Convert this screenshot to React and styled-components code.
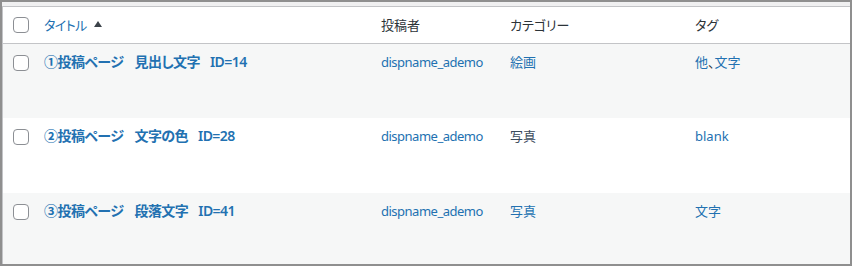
import React from "react";
import styled, { createGlobalStyle } from "styled-components";

const Global = createGlobalStyle`
  html, body { margin: 0; padding: 0; background: #ffffff; overflow: hidden; }
  body {
    font-family: "Noto Sans", "Noto Sans CJK JP", sans-serif;
    font-feature-settings: "palt";
    font-size: 13px;
    color: #2c3338;
  }
`;

const Frame = styled.div`
  width: 848px;
  height: 258px;
  border: 2px solid #8f8f8f;
  background: #f0f0f1;
  padding-top: 4px;
  box-sizing: content-box;
  overflow: hidden;
`;

const Table = styled.div`
  border-top: 1px solid #c3c4c7;
  border-left: 1px solid #c3c4c7;
  background: #fff;
`;

const Row = styled.div`
  display: grid;
  grid-template-columns: 31px 337px 129px 185px 1fr;
  height: ${(p) => p.$h}px;
  background: ${(p) => (p.$alt ? "#f6f7f7" : "#ffffff")};
  border-bottom: ${(p) => (p.$head ? "1px solid #c3c4c7" : "none")};
`;

const Cell = styled.div`
  padding: 8px 10px;
  line-height: 20px;
  font-size: 13px;
  white-space: nowrap;
`;

const CheckCell = styled.div`
  padding: ${(p) => (p.$head ? "10px 0 0 10px" : "11px 0 0 10px")};
`;

const Box = styled.span`
  display: block;
  width: 16px;
  height: 16px;
  box-sizing: border-box;
  border: 1px solid #8c8f94;
  border-radius: 4px;
  background: #fff;
`;

const HeadText = styled.span`
  color: #2c3338;
  font-size: 13px;
`;

const SortLink = styled.a`
  display: inline-flex;
  align-items: center;
  gap: 7px;
  color: #2271b1;
  text-decoration: none;
  letter-spacing: -0.6px;
`;

const Arrow = styled.span`
  width: 0;
  height: 0;
  border-left: 4px solid transparent;
  border-right: 4px solid transparent;
  border-bottom: 6px solid #3c434a;
  margin-top: -2px;
`;

const Title = styled.a`
  font-size: 14px;
  font-weight: 600;
  color: #2271b1;
  text-decoration: none;
  letter-spacing: -0.55px;
`;

const Gap = styled.span`
  display: inline-block;
  width: ${(p) => p.$w}px;
`;

const Link = styled.a`
  color: ${(p) => p.$color || "#2271b1"};
  text-decoration: none;
  letter-spacing: ${(p) => (p.$tight ? "-0.5px" : "0")};
`;

const Sep = styled.span`
  color: #2c3338;
`;

const posts = [
  { no: "①", a: "見出し文字", id: 14, cat: "絵画", tags: ["他", "文字"], h: 74, alt: true },
  { no: "②", a: "文字の色", id: 28, cat: "写真", catColor: "#3b4b5c", tags: ["blank"], h: 75, alt: false },
  { no: "③", a: "段落文字", id: 41, cat: "写真", tags: ["文字"], h: 75, alt: true },
];

export default function App() {
  return (
    <>
      <Global />
      <Frame>
        <Table>
          <Row $head $h={36}>
            <CheckCell $head>
              <Box />
            </CheckCell>
            <Cell>
              <SortLink href="#">
                タイトル
                <Arrow />
              </SortLink>
            </Cell>
            <Cell>
              <HeadText>投稿者</HeadText>
            </Cell>
            <Cell>
              <HeadText>カテゴリー</HeadText>
            </Cell>
            <Cell>
              <HeadText>タグ</HeadText>
            </Cell>
          </Row>
          {posts.map((p) => (
            <Row key={p.id} $h={p.h} $alt={p.alt}>
              <CheckCell>
                <Box />
              </CheckCell>
              <Cell>
                <Title href="#">
                  {p.no}投稿ページ<Gap $w={11} />
                  {p.a}
                  <Gap $w={10} />
                  ID=
                  {p.id}
                </Title>
              </Cell>
              <Cell>
                <Link href="#" $tight>
                  dispname_ademo
                </Link>
              </Cell>
              <Cell>
                <Link href="#" $color={p.catColor}>
                  {p.cat}
                </Link>
              </Cell>
              <Cell>
                {p.tags.map((t, i) => (
                  <React.Fragment key={t}>
                    {i > 0 && <Sep>、</Sep>}
                    <Link href="#">{t}</Link>
                  </React.Fragment>
                ))}
              </Cell>
            </Row>
          ))}
        </Table>
      </Frame>
    </>
  );
}
